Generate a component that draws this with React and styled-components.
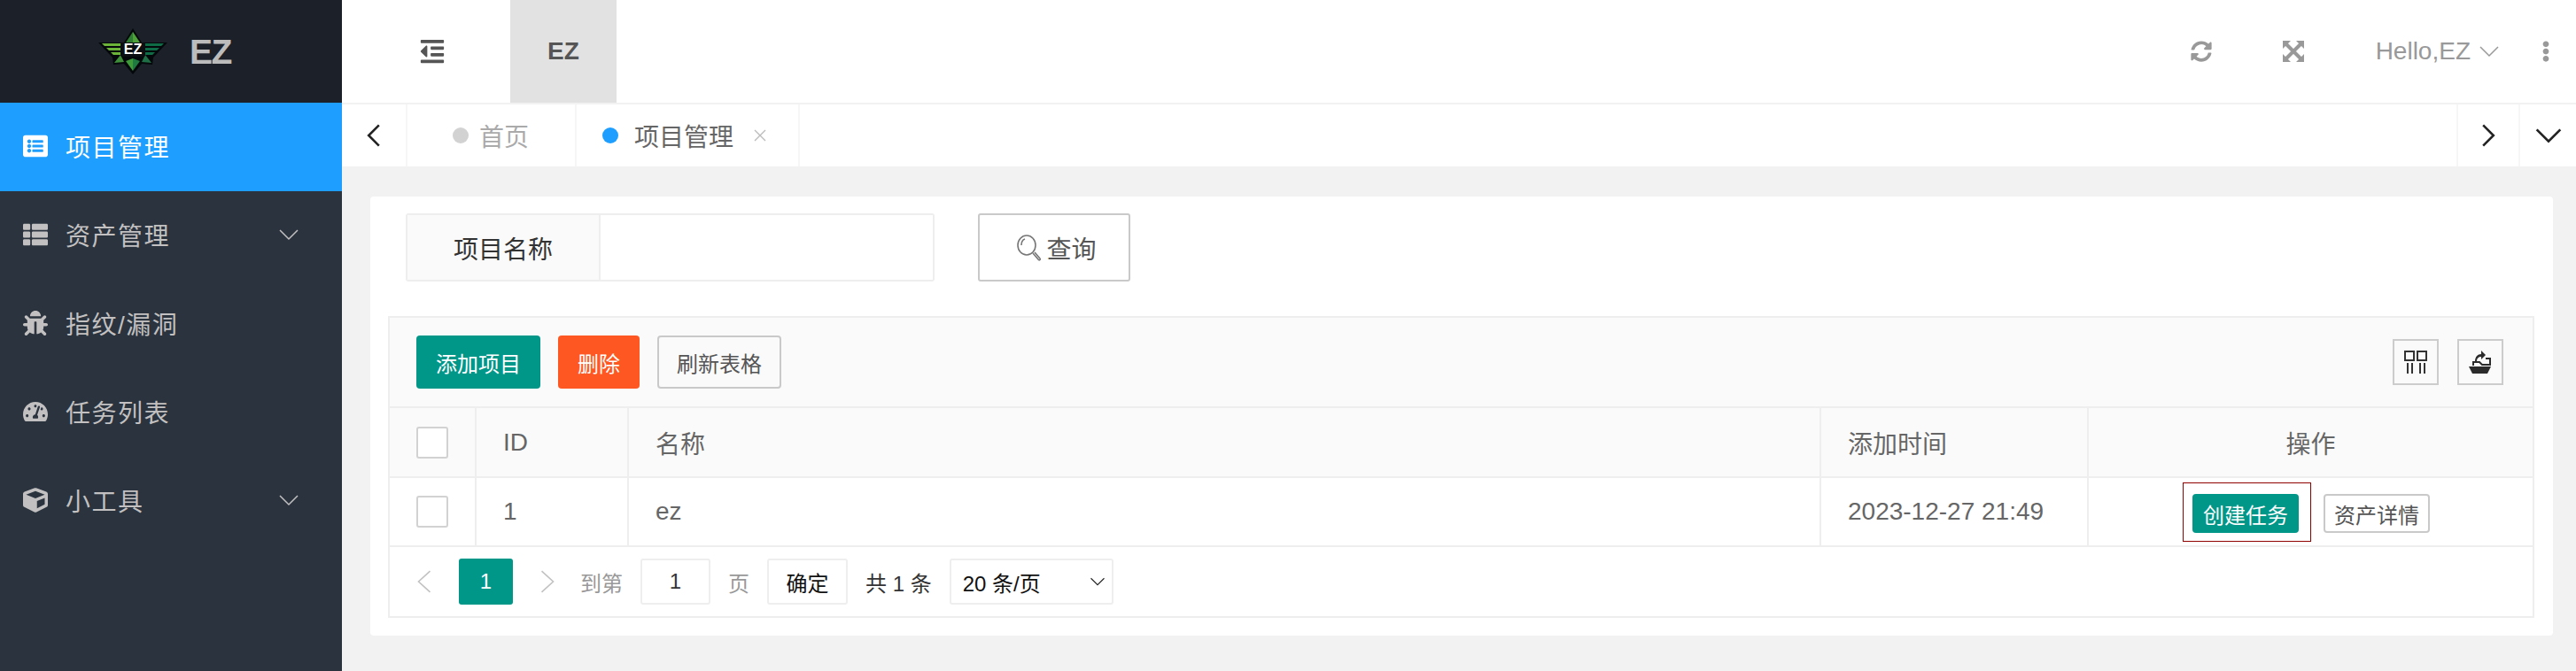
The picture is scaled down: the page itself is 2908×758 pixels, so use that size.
import React from 'react'
import styled, { createGlobalStyle } from 'styled-components'
import {
  FaListAlt,
  FaThList,
  FaBug,
  FaTachometerAlt,
  FaCube,
  FaOutdent,
  FaSyncAlt,
  FaEllipsisV
} from 'react-icons/fa'

const GlobalStyle = createGlobalStyle`
  * {
    box-sizing: border-box;
  }
  html, body {
    margin: 0;
    padding: 0;
    height: 100%;
    overflow: hidden;
    background: #f2f2f2;
    font-family: "Liberation Sans", "Noto Sans CJK SC", sans-serif;
  }
`

const Page = styled.div`
  display: flex;
  width: 2908px;
  height: 758px;
`

const Sidebar = styled.aside`
  flex: 0 0 386px;
  background: #2a333e;
`

const Brand = styled.div`
  height: 116px;
  background: #1b2029;
  display: flex;
  align-items: center;
  padding-left: 111px;
  gap: 25px;
`

const BrandName = styled.span`
  font-size: 39px;
  line-height: 1;
  font-weight: 700;
  letter-spacing: -1.5px;
  color: #bdbcbc;
`

const MenuItem = styled.div`
  height: 100px;
  display: flex;
  align-items: center;
  padding: 0 48px 2px 26px;
  font-size: 28px;
  letter-spacing: 1.5px;
  color: ${(p) => (p.$active ? '#fff' : '#c2c0c0')};
  background: ${(p) => (p.$active ? '#1e9fff' : 'transparent')};
`

const MenuIcon = styled.span`
  flex: 0 0 48px;
  display: flex;
  align-items: center;
  font-size: 28px;
`

const MenuLabel = styled.span`
  flex: 1;
`

const Main = styled.div`
  flex: 1;
  display: flex;
  flex-direction: column;
  min-width: 0;
`

const Header = styled.header`
  height: 118px;
  background: #fff;
  border-bottom: 2px solid #f2f2f2;
  display: flex;
  align-items: stretch;
`

const MenuToggle = styled.div`
  width: 190px;
  padding-left: 14px;
  display: flex;
  align-items: center;
  justify-content: center;
  color: #555;
  font-size: 30px;
`

const CurrentApp = styled.div`
  width: 120px;
  display: flex;
  align-items: center;
  justify-content: center;
  background: #e2e2e2;
  font-size: 28px;
  font-weight: 700;
  color: #555;
`

const HeaderTools = styled.div`
  margin-left: auto;
  display: flex;
  align-items: center;
  color: #999;
  padding-right: 22px;
`

const ToolIcon = styled.span`
  display: flex;
  font-size: 24px;
  margin-right: ${(p) => p.$gap}px;
`

const Greeting = styled.span`
  display: flex;
  align-items: center;
  gap: 9px;
  font-size: 28px;
  margin-right: 40px;
`

const TabBar = styled.div`
  height: 70px;
  background: #fff;
  display: flex;
  align-items: stretch;
`

const TabArrow = styled.div`
  width: ${(p) => p.$width}px;
  display: flex;
  align-items: center;
  justify-content: center;
  border-${(p) => p.$border}: 2px solid #f6f6f6;
`

const Tab = styled.div`
  width: ${(p) => p.$width}px;
  display: flex;
  align-items: center;
  padding-left: ${(p) => p.$pad}px;
  border-right: 2px solid #f6f6f6;
  font-size: 28px;
  color: ${(p) => (p.$active ? '#666' : '#aaa')};
`

const TabDot = styled.span`
  width: 18px;
  height: 18px;
  border-radius: 50%;
  margin-right: ${(p) => (p.$active ? 18 : 12)}px;
  background: ${(p) => (p.$active ? '#1e9fff' : '#d2d2d2')};
`

const TabClose = styled.span`
  display: flex;
  margin-left: 22px;
  color: #bbb;
`

const TabSpacer = styled.div`
  flex: 1;
`

const Content = styled.main`
  flex: 1;
  padding: 34px 26px 40px 32px;
`

const Card = styled.section`
  background: #fff;
  border-radius: 4px;
  padding: 19px 21px 20px 20px;
`

const SearchRow = styled.div`
  display: flex;
  gap: 49px;
  padding-left: 20px;
  margin-bottom: 39px;
`

const Field = styled.div`
  width: 597px;
  height: 77px;
  display: flex;
  border: 2px solid #eee;
  border-radius: 3px;
`

const FieldLabel = styled.label`
  width: 218px;
  display: flex;
  align-items: center;
  justify-content: center;
  background: #fafafa;
  border-right: 2px solid #eee;
  font-size: 28px;
  color: #333;
`

const FieldInput = styled.input`
  flex: 1;
  min-width: 0;
  border: 0;
  outline: 0;
  background: #fff;
`

const SearchButton = styled.button`
  width: 172px;
  height: 77px;
  padding: 0 0 0 6px;
  display: flex;
  align-items: center;
  justify-content: center;
  gap: 5px;
  background: #fff;
  border: 2px solid #c9c9c9;
  border-radius: 3px;
  font: inherit;
  font-size: 28px;
  color: #555;
`

const TableBox = styled.div`
  border: 2px solid #eee;
`

const Toolbar = styled.div`
  height: 102px;
  background: #fafafa;
  border-bottom: 2px solid #eee;
  display: flex;
  align-items: center;
  justify-content: space-between;
  padding: 0 33px 0 30px;
`

const ToolGroup = styled.div`
  display: flex;
  gap: 20px;
`

const IconGroup = styled.div`
  display: flex;
  gap: 21px;
`

const Button = styled.button`
  height: 60px;
  padding: 0 ${(p) => (p.$tone ? 22 : 20)}px;
  display: inline-flex;
  align-items: center;
  justify-content: center;
  font: inherit;
  font-size: 24px;
  border-radius: 4px;
  border: ${(p) => (p.$tone ? 'none' : '2px solid #c9c9c9')};
  background: ${(p) =>
    p.$tone === 'green' ? '#009688' : p.$tone === 'orange' ? '#ff5722' : 'transparent'};
  color: ${(p) => (p.$tone ? '#fff' : '#555')};
`

const RowButton = styled(Button)`
  height: 44px;
  margin-top: 4px;
  padding: 0 ${(p) => (p.$tone ? 12 : 10)}px;
`

const IconButton = styled.button`
  width: 52px;
  height: 52px;
  padding: 0;
  display: flex;
  align-items: center;
  justify-content: center;
  background: transparent;
  border: 2px solid #ccc;
  color: #333;
`

const Row = styled.div`
  display: grid;
  grid-template-columns: 98px 172px 1346px 302px 1fr;
  height: ${(p) => (p.$head ? 79 : 78)}px;
  background: ${(p) => (p.$head ? '#fafafa' : '#fff')};
  border-bottom: 2px solid #eee;
`

const Cell = styled.div`
  display: flex;
  align-items: center;
  justify-content: ${(p) => (p.$center ? 'center' : 'flex-start')};
  padding-left: ${(p) => (p.$center ? 0 : 30)}px;
  border-right: ${(p) => (p.$last ? 'none' : '2px solid #eee')};
  font-size: 28px;
  color: #666;
`

const Check = styled.span`
  width: 36px;
  height: 36px;
  border: 2px solid #d2d2d2;
  border-radius: 3px;
  background: #fff;
`

const Actions = styled.div`
  display: flex;
  align-items: center;
  gap: 28px;
  padding-right: 10px;
`

const Highlight = styled.span`
  display: flex;
  align-items: center;
  width: 145px;
  height: 67px;
  padding-left: 10px;
  border: 1px solid #8f0000;
  margin-right: -14px;
`

const Pager = styled.div`
  height: 78px;
  background: #fff;
  display: flex;
  align-items: center;
  gap: 26px;
  padding-left: 26px;
  font-size: 24px;
  color: #999;
`

const PageNumber = styled.span`
  width: 61px;
  height: 52px;
  display: flex;
  align-items: center;
  justify-content: center;
  background: #009688;
  border-radius: 3px;
  color: #fff;
`

const Jump = styled.div`
  display: flex;
  align-items: center;
  gap: 20px;
  margin-left: -2px;
`

const PageInput = styled.input`
  width: 79px;
  height: 52px;
  border: 2px solid #eee;
  border-radius: 3px;
  outline: 0;
  text-align: center;
  font: inherit;
  color: #333;
`

const ConfirmButton = styled.button`
  width: 91px;
  height: 52px;
  background: #fff;
  border: 2px solid #eee;
  border-radius: 3px;
  font: inherit;
  color: #111;
`

const Total = styled.span`
  color: #333;
`

const PageSize = styled.div`
  width: 185px;
  height: 52px;
  padding: 0 7px 0 13px;
  display: flex;
  align-items: center;
  justify-content: space-between;
  border: 2px solid #eee;
  border-radius: 3px;
  color: #111;
`

const chevrons = {
  down: 'M2 7l10 10 10-10',
  left: 'M17 2L7 12l10 10',
  right: 'M7 2l10 10L7 22',
  pageLeft: 'M18 1L6 12l12 11',
  pageRight: 'M6 1l12 11L6 23'
}

const Chevron = ({ dir = 'down', size = 20, weight = 1.5, color = 'currentColor' }) => (
  <svg width={size} height={size} viewBox="0 0 24 24" fill="none" stroke={color} strokeWidth={weight}>
    <path d={chevrons[dir]} />
  </svg>
)

const Logo = () => (
  <svg width="78" height="53" viewBox="0 0 78 53">
    <path d="M39 0l10 16h29L62 33l-1 8-12-1-10 12-10-12-12 1-1-8L0 16h29z" fill="#05080a" />
    <path d="M39 4l-8 12h8z" fill="#2f7d33" />
    <path d="M39 4l8 12h-8z" fill="#4fa23a" />
    <path d="M4 17h22v3H7zM9 22h17v3H12zM14 27h12v3H17z" fill="#6cb33a" />
    <path d="M74 17H52v3h19zM69 22H52v3h14zM64 27H52v3h9z" fill="#0f6a46" />
    <path d="M39 48l-8-11 8-3z" fill="#3f9a3a" />
    <path d="M39 48l8-11-8-3z" fill="#1f7a3f" />
    <path d="M18 39l7-9 4 8z" fill="#3f8f3a" />
    <path d="M60 39l-7-9-4 8z" fill="#1e6f45" />
    <rect x="25" y="16" width="28" height="16" rx="2" fill="#0b0f12" />
    <text x="39" y="29" textAnchor="middle" fontSize="16" fontWeight="700" fontFamily="Liberation Sans" fill="#fff">
      EZ
    </text>
  </svg>
)

const ExpandIcon = () => (
  <svg width="24" height="24" viewBox="0 0 24 24" fill="currentColor">
    <path d="M0 0h9L0 9zM24 0v9l-9-9zM0 24v-9l9 9zM24 24h-9l9-9z" />
    <path d="M4 4l16 16M20 4L4 20" stroke="currentColor" strokeWidth="4" />
  </svg>
)

const SearchIcon = () => (
  <svg width="28" height="32" viewBox="0 0 28 32" fill="none" stroke="#777" strokeWidth="1.6">
    <ellipse cx="11" cy="13" rx="10" ry="11" />
    <path d="M5 13c0-4 1-6 4-7" />
    <path d="M18 22l6 7c1 2 3 0 2-1l-6-7" />
  </svg>
)

const ColsIcon = () => (
  <svg width="26" height="26" viewBox="0 0 26 26" fill="none" stroke="#333" strokeWidth="2">
    <rect x="1" y="1" width="10" height="10" />
    <rect x="15" y="1" width="10" height="10" />
    <path d="M4 14v12M9 14v12M18 14v12M23 14v12" />
  </svg>
)

const ExportIcon = () => (
  <svg width="26" height="26" viewBox="0 0 26 26" fill="#2b2b2b">
    <path d="M14 0l5 5-5 5V7c-3 0-5 2-5 5H7c0-5 3-8 7-8z" />
    <path d="M5 17v-4h7l3 3h9v1M24 16V9h-5" fill="none" stroke="#2b2b2b" strokeWidth="2" />
    <path d="M0 18h25l-4 8H4z" />
  </svg>
)

const menu = [
  { label: '项目管理', icon: <FaListAlt />, active: true },
  { label: '资产管理', icon: <FaThList />, open: true },
  { label: '指纹/漏洞', icon: <FaBug /> },
  { label: '任务列表', icon: <FaTachometerAlt /> },
  { label: '小工具', icon: <FaCube />, open: true }
]

const App = () => (
  <Page>
    <GlobalStyle />
    <Sidebar>
      <Brand>
        <Logo />
        <BrandName>EZ</BrandName>
      </Brand>
      {menu.map((item) => (
        <MenuItem key={item.label} $active={item.active}>
          <MenuIcon>{item.icon}</MenuIcon>
          <MenuLabel>{item.label}</MenuLabel>
          {item.open && <Chevron size={24} />}
        </MenuItem>
      ))}
    </Sidebar>
    <Main>
      <Header>
        <MenuToggle>
          <FaOutdent />
        </MenuToggle>
        <CurrentApp>EZ</CurrentApp>
        <HeaderTools>
          <ToolIcon $gap={80}>
            <FaSyncAlt />
          </ToolIcon>
          <ToolIcon $gap={81}>
            <ExpandIcon />
          </ToolIcon>
          <Greeting>
            Hello,EZ
            <Chevron size={24} />
          </Greeting>
          <ToolIcon $gap={0}>
            <FaEllipsisV />
          </ToolIcon>
        </HeaderTools>
      </Header>
      <TabBar>
        <TabArrow $width={74} $border="right">
          <Chevron dir="left" size={28} weight={2.2} color="#222" />
        </TabArrow>
        <Tab $width={191} $pad={51}>
          <TabDot />
          首页
        </Tab>
        <Tab $width={252} $pad={29} $active>
          <TabDot $active />
          项目管理
          <TabClose>
            <svg width="16" height="16" viewBox="0 0 16 16" stroke="currentColor" strokeWidth="1.4">
              <path d="M2 2l12 12M14 2L2 14" />
            </svg>
          </TabClose>
        </Tab>
        <TabSpacer />
        <TabArrow $width={70} $border="left">
          <Chevron dir="right" size={28} weight={2.2} color="#222" />
        </TabArrow>
        <TabArrow $width={65} $border="left">
          <Chevron dir="down" size={32} weight={2} color="#222" />
        </TabArrow>
      </TabBar>
      <Content>
        <Card>
          <SearchRow>
            <Field>
              <FieldLabel>项目名称</FieldLabel>
              <FieldInput />
            </Field>
            <SearchButton>
              <SearchIcon />
              查询
            </SearchButton>
          </SearchRow>
          <TableBox>
            <Toolbar>
              <ToolGroup>
                <Button $tone="green">添加项目</Button>
                <Button $tone="orange">删除</Button>
                <Button>刷新表格</Button>
              </ToolGroup>
              <IconGroup>
                <IconButton>
                  <ColsIcon />
                </IconButton>
                <IconButton>
                  <ExportIcon />
                </IconButton>
              </IconGroup>
            </Toolbar>
            <Row $head>
              <Cell $center>
                <Check />
              </Cell>
              <Cell>ID</Cell>
              <Cell>名称</Cell>
              <Cell>添加时间</Cell>
              <Cell $center $last>
                操作
              </Cell>
            </Row>
            <Row>
              <Cell $center>
                <Check />
              </Cell>
              <Cell>1</Cell>
              <Cell>ez</Cell>
              <Cell>2023-12-27 21:49</Cell>
              <Cell $center $last>
                <Actions>
                  <Highlight>
                    <RowButton $tone="green">创建任务</RowButton>
                  </Highlight>
                  <RowButton>资产详情</RowButton>
                </Actions>
              </Cell>
            </Row>
            <Pager>
              <Chevron dir="pageLeft" size={26} color="#c2c2c2" />
              <PageNumber>1</PageNumber>
              <Chevron dir="pageRight" size={26} color="#c2c2c2" />
              <Jump>
                <span>到第</span>
                <PageInput defaultValue="1" />
                <span>页</span>
                <ConfirmButton>确定</ConfirmButton>
                <Total>共 1 条</Total>
                <PageSize>
                  20 条/页
                  <Chevron size={18} color="#222" />
                </PageSize>
              </Jump>
            </Pager>
          </TableBox>
        </Card>
      </Content>
    </Main>
  </Page>
)

export default App
